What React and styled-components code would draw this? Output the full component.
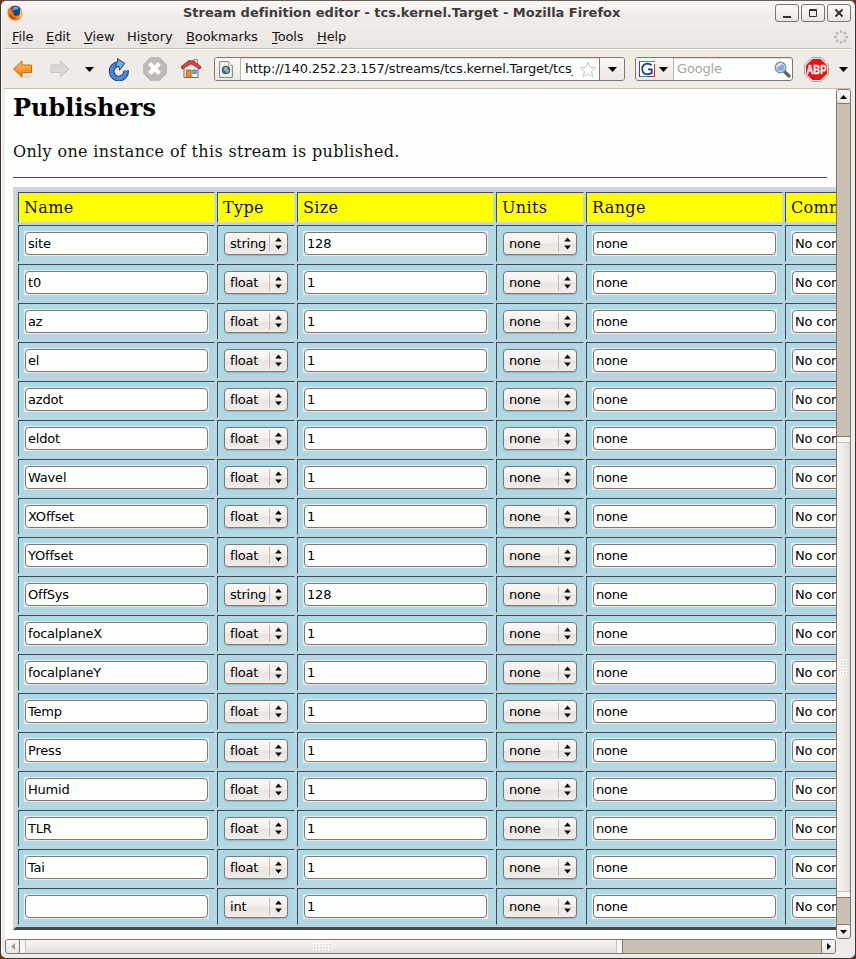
import React from 'react';
import styled, { createGlobalStyle, css } from 'styled-components';

const Global = createGlobalStyle`
  * { box-sizing: border-box; }
  html, body { margin: 0; padding: 0; background: #6f3012; overflow: hidden; }
`;

const uiFont = css`
  font-family: 'DejaVu Sans', sans-serif;
  font-size: 13px;
  line-height: 16px;
  color: #141414;
`;

const Window = styled.div`
  ${uiFont}
  width: 856px;
  height: 959px;
  display: flex;
  flex-direction: column;
  padding: 0 3px 2px 3px;
  border: 1px solid #3b3633;
  border-top-color: #695c57;
  border-radius: 6px;
  background: #efebe7;
  box-shadow: inset 1px 1px 0 #fbf8f6;
  white-space: nowrap;
`;

const TitleBar = styled.header`
  height: 23px;
  display: flex;
  align-items: center;
  padding-left: 5px;
  margin: 0 -2px;
  border-radius: 5px 5px 0 0;
  background: linear-gradient(#faf7f6, #f1ecea 70%, #eeeae7);
`;
const Title = styled.h1`
  flex: 1;
  margin: 0;
  padding-left: 160px;
  font-size: 13px;
  line-height: 16px;
  letter-spacing: -0.01px;
  font-weight: bold;
  color: #3f3b39;
`;
const WindowButtons = styled.div`
  display: flex;
  gap: 2px;
  padding-right: 3px;
`;
const WindowButton = styled.div`
  width: 24px;
  height: 18px;
  border: 1px solid #82746d;
  border-radius: 3px;
  background: linear-gradient(#fcfafa, #ebe6e3);
  svg { display: block; }
`;

const MenuBar = styled.nav`
  height: 25px;
  display: flex;
  align-items: center;
  padding: 1px 2px 0 8px;
  margin-right: 1px;
  border-bottom: 1px solid #cabfae;
  background: linear-gradient(#f0ece9, #e9e4e0);
`;
const MenuItem = styled.span`
  width: ${(p) => p.$w}px;
  letter-spacing: -0.1px;
  u { text-underline-offset: 2px; text-decoration-thickness: 1px; }
`;
const Spacer = styled.div`
  flex: 1;
`;

const ToolBar = styled.div`
  height: 40px;
  display: flex;
  align-items: center;
  padding-left: 5px;
  margin-right: 1px;
  border-top: 1px solid #fbfaf8;
  border-bottom: 1px solid #c9bdab;
  background: #efebe7;
`;
const ToolIcon = styled.div`
  width: ${(p) => p.$w}px;
  height: 26px;
  display: flex;
  justify-content: center;
  align-items: center;
  svg { display: block; flex: none; }
`;
const Field = styled.div`
  display: flex;
  align-items: center;
  width: ${(p) => p.$w}px;
  height: 24px;
  border: 1px solid #85756d;
  border-radius: 3px;
  background: #fdfffd;
  box-shadow: inset 0 1px 0 #e4deda;
  overflow: hidden;
`;
const FieldButton = styled.div`
  width: ${(p) => p.$w}px;
  height: 22px;
  display: flex;
  align-items: center;
  justify-content: center;
  gap: 4px;
  background: linear-gradient(#f9f7f6, #ece7e3);
  ${(p) => p.$side === 'right' && 'border-left: 1px solid #85756d;'}
  ${(p) => p.$side === 'left' && 'border-right: 1px solid #bcb3ab; padding-right: 2px;'}
`;
const FieldText = styled.span`
  width: ${(p) => p.$w}px;
  padding-left: ${(p) => (p.$hint ? 3 : 4)}px;
  overflow: hidden;
  letter-spacing: -0.17px;
  color: ${(p) => (p.$hint ? '#aaa29c' : '#111')};
`;

const Browser = styled.main`
  flex: none;
  display: grid;
  grid-template-columns: 831px 15px;
  grid-template-rows: 850px 15px;
  margin-left: 1px;
`;
const Page = styled.section`
  overflow: hidden;
  padding: 0 0 0 8px;
  background: #fdfffd;
  font-family: 'DejaVu Serif', serif;
  font-size: 16px;
  letter-spacing: 0.35px;
  color: #111;
`;
const Heading = styled.h2`
  margin: 5px 0 0;
  font-size: 24px;
  line-height: 28px;
  letter-spacing: 0;
  font-weight: bold;
  color: #000;
`;
const Paragraph = styled.p`
  margin: 20px 0 0;
  line-height: 20px;
`;
const Rule = styled.hr`
  width: 814px;
  height: 2px;
  margin: 15px 0 0;
  border: 0;
  border-top: 1px solid #464646;
`;

const StreamTable = styled.table`
  table-layout: fixed;
  width: 974px;
  margin-top: 8px;
  border: 3px solid;
  border-color: #d6d3d4 #454b4c #454b4c #d6d3d4;
  border-collapse: separate;
  border-spacing: 2px;
  background: #add8e6;
`;
const cell = css`
  padding: 0 5px;
  border: 1px solid;
  border-color: #464a4e #d3d0d2 #d3d0d2 #464a4e;
  text-align: left;
`;
const HeadCell = styled.th`
  ${cell}
  width: ${(p) => p.$w}px;
  height: 31px;
  line-height: 20px;
  font-weight: normal;
  background: #ffff00;
`;
const Cell = styled.td`
  ${cell}
  height: 37px;
`;
const TextFrame = styled.div`
  width: 185px;
  height: 25px;
  padding: 1px;
  background: #ece8e5;
`;
const TextBox = styled.div`
  ${uiFont}
  width: 183px;
  height: 23px;
  padding: 3px 2px;
  letter-spacing: -0.2px;
  color: #000;
  border: 1px solid #85756d;
  border-radius: 4px;
  background: #fdfffd;
`;
const Select = styled.div`
  ${uiFont}
  display: flex;
  align-items: center;
  justify-content: space-between;
  width: ${(p) => p.$w}px;
  height: 23px;
  margin: 0 0 0 1px;
  padding: 0 0 0 5px;
  letter-spacing: -0.2px;
  color: #000;
  border: 1px solid #85756d;
  border-radius: 4px;
  background: linear-gradient(#faf8f7, #f3efed 48%, #e9e4e0 52%, #f1edea);
  box-shadow: 0 1px 1px rgba(80, 90, 95, 0.25);
`;
const Arrows = styled.span`
  width: 18px;
  height: 17px;
  border-left: 1px solid #c5bcb5;
  display: flex;
  justify-content: center;
  align-items: center;
`;

const Track = styled.div`
  display: flex;
  flex-direction: ${(p) => (p.$vertical ? 'column' : 'row')};
  background: #c9bfb2;
  border: 1px solid #82766e;
  border-radius: 3px;
`;
const ScrollButton = styled.div`
  flex: none;
  width: ${(p) => (p.$vertical ? 13 : 14)}px;
  height: ${(p) => (p.$vertical ? 14 : 13)}px;
  display: flex;
  align-items: center;
  justify-content: center;
  border-radius: 2px;
  background: linear-gradient(#faf8f7, #eae5e1);
  border: 0 solid #82766e;
  ${(p) => p.$edge && `border-${p.$edge}-width: 1px;`}
`;
const Trough = styled.div`
  flex: ${(p) => (p.$size ? `0 0 ${p.$size}px` : '1')};
`;
const Thumb = styled.div`
  flex: 0 0 ${(p) => p.$size}px;
  display: flex;
  flex-direction: ${(p) => (p.$vertical ? 'column' : 'row')};
  align-items: center;
  justify-content: space-between;
  border: 0 solid #82766e;
  ${(p) => (p.$vertical ? 'border-top-width: 1px; border-bottom-width: 1px;' : 'border-right-width: 1px;')}
  background: linear-gradient(${(p) => (p.$vertical ? '90deg' : '180deg')}, #f7f4f2, #efebe8 50%, #e2dbd6);
`;
const ThumbCap = styled.div`
  align-self: stretch;
  flex: 0 0 6px;
  background: #f7f5f3;
  border: 0 solid #cdc4bd;
  border-${(p) => p.$edge}-width: 1px;
`;

const Caret = ({ w = 9, h = 5, dir = 'down', color = '#000' }) => {
  const d = {
    down: `M0 0H${w}L${w / 2} ${h}Z`,
    up: `M0 ${h}H${w}L${w / 2} 0Z`,
    left: `M${w} 0V${h}L0 ${h / 2}Z`,
    right: `M0 0V${h}L${w} ${h / 2}Z`,
  }[dir];
  return (
    <svg width={w} height={h}>
      <path d={d} fill={color} />
    </svg>
  );
};

const FirefoxIcon = () => (
  <svg width="16" height="16" viewBox="0 0 16 16">
    <circle cx="8" cy="8" r="7.4" fill="#e66000" />
    <circle cx="8.6" cy="6.4" r="5.6" fill="#17468f" />
    <path d="M6 2.3q3-1.6 5.6.2l-1 2-2.2-.2-1 1.3-2-.8z" fill="#5fa6d8" />
    <path d="M1 3.5l1.2 1 2.2-.3 1.4 1.4-1 1.4 2 .5-.8 1.6 2.4 2 3.3-.7 1.5-2.2.4-4.7 1.3 2.5q.7 8-6.4 9.2Q.7 15 .6 8z" fill="#ee7d13" />
    <path d="M13.2 3.2q2.4 3 1.5 6.3-1 3.3-4.3 4.5 2.8-2.8 2.8-5.6z" fill="#ffd64a" />
    <path d="M3 9q1 4 5.4 4.4" stroke="#b93609" strokeWidth="1.4" fill="none" />
  </svg>
);
const BackIcon = () => (
  <svg width="22" height="20" viewBox="0 0 22 20">
    <defs>
      <linearGradient id="bk" x2="0" y2="1">
        <stop offset="0" stopColor="#ffc060" />
        <stop offset="1" stopColor="#f57900" />
      </linearGradient>
    </defs>
    <ellipse cx="12" cy="17.8" rx="8" ry="1.4" fill="#dfd9d4" />
    <path d="M1.5 10L10 2V6H19.5V13.5H10V18Z" fill="url(#bk)" stroke="#cf6c0f" strokeLinejoin="round" />
  </svg>
);
const ForwardIcon = () => (
  <svg width="22" height="20" viewBox="0 0 22 20">
    <path d="M20 10L11.5 2V6H2V13.5H11.5V18Z" fill="#dcd6d4" stroke="#c9c2bf" strokeLinejoin="round" />
  </svg>
);
const ReloadIcon = () => (
  <svg width="22" height="24" viewBox="0 0 22 24">
    <path d="M18 13.5A7.2 7.2 0 1 1 10 7.2" fill="none" stroke="#17408a" strokeWidth="5.8" />
    <path d="M18 13.9A7.2 7.2 0 1 1 10.6 7.1" fill="none" stroke="#4a86d6" strokeWidth="3.9" />
    <path d="M9.4 1.6L16.8 6.4 11.5 13.2 11 9.4 8 9.7 8.2 5.3 9.8 5Z" fill="#79a8e2" stroke="#17408a" strokeLinejoin="round" />
  </svg>
);
const StopIcon = () => (
  <svg width="24" height="24" viewBox="0 0 24 24">
    <path d="M7.5.8h9L23.2 7.5v9L16.5 23.2h-9L.8 16.5v-9Z" fill="#c0b9b4" stroke="#b3aca7" />
    <path d="M6.6 6.6l9.8 9.8M16.4 6.6L6.6 16.4" stroke="#fff" strokeWidth="4.2" />
  </svg>
);
const HomeIcon = () => (
  <svg width="22" height="22" viewBox="0 0 22 22">
    <path d="M14 1.5h3.4v6H14z" fill="#f6f6f6" stroke="#777" strokeWidth=".8" />
    <path d="M4 8.5l7-4.500 7 4.500v11H4z" fill="#f4f1ee" stroke="#706a66" />
    <path d="M1 8.800L8.500 2.800H13.500L21 8.800 19.800 11 11 5.800 2.200 11z" fill="#dd4540" stroke="#a41f1b" strokeWidth=".9" strokeLinejoin="round" />
    <path d="M6.500 12h4.600v7.400H6.500z" fill="#f08a24" stroke="#a2500a" strokeWidth=".8" />
    <path d="M12.800 12h3.400v3.400h-3.400z" fill="#55c8e8" stroke="#38687a" strokeWidth=".8" />
  </svg>
);
const PageIcon = () => (
  <svg width="14" height="17" viewBox="0 0 14 17">
    <path d="M.6.6H9.6L13.4 4.4V16.4H.6Z" fill="#f2f2f0" stroke="#85857f" />
    <path d="M9.6.6V4.4H13.4" fill="#fff" stroke="#9a9a94" strokeWidth=".8" />
    <circle cx="7" cy="9" r="3.9" fill="#3a69ad" stroke="#28518f" strokeWidth=".8" />
    <path d="M4.7 7.2l2-1.5 1.8.6-.5 1.6 1.8.8-.5 2.3-1.6 1.2-1-2.3L5 9.3z" fill="#a8c468" />
  </svg>
);
const StarIcon = () => (
  <svg width="18" height="17" viewBox="0 0 18 17">
    <path d="M9 1.4l2.2 5 5.4.5-4.1 3.6 1.3 5.3L9 13l-4.800 2.800 1.300-5.300L1.400 6.900l5.400-.5z" fill="#fdfffd" stroke="#c8c6c4" strokeLinejoin="round" />
  </svg>
);
const GoogleIcon = () => (
  <svg width="16" height="16" viewBox="0 0 16 16">
    <rect width="16" height="16" fill="#fff" />
    <path d="M0 .5H16M0 15.5H8" stroke="#3ca83c" />
    <path d="M.5 0V16M8 15.5H12" stroke="#2a49b8" />
    <path d="M15.5 3V16M12 15.5H16" stroke="#d22f1c" />
    <path d="M12.6 4.3Q11 2.6 8.5 2.6Q3.3 2.8 3.2 8Q3.4 13.2 8.5 13.3Q11 13.2 12.7 12V8.4H9" fill="none" stroke="#143a9a" strokeWidth="1.7" />
  </svg>
);
const SearchIcon = () => (
  <svg width="17" height="17" viewBox="0 0 17 17">
    <path d="M10.3 10.3L15 15" stroke="#62625f" strokeWidth="3.2" strokeLinecap="round" />
    <circle cx="6.5" cy="6.5" r="5.2" fill="#9fc3ea" stroke="#8b8f92" strokeWidth="1.5" />
    <circle cx="6.5" cy="6.5" r="4.2" fill="#7fafe2" stroke="#e4eefa" strokeWidth=".7" />
    <path d="M3.5 6Q4.5 3 7.5 3.5" stroke="#dcebfa" strokeWidth="1.6" fill="none" />
  </svg>
);
const AdblockIcon = () => (
  <svg width="25" height="25" viewBox="0 0 25 25">
    <path d="M7.7.7h9.6L24.3 7.7v9.6L17.3 24.3H7.7L.7 17.3V7.7Z" fill="#fff" stroke="#9b9591" />
    <path d="M8.3 2h8.4L23 8.3v8.4L16.7 23H8.3L2 16.7V8.3Z" fill="#ee1111" />
    <text x="12.5" y="17" textAnchor="middle" textLength="20" lengthAdjust="spacingAndGlyphs" fontFamily="Liberation Sans, sans-serif" fontWeight="bold" fontSize="13" fill="#fff" stroke="#fff" strokeWidth=".3">ABP</text>
  </svg>
);
const Throbber = () => (
  <svg width="16" height="16" viewBox="0 0 16 16">
    {[0, 1, 2, 3, 4, 5, 6, 7].map((i) => (
      <rect key={i} x="6.8" y="1" width="2.4" height="3" rx=".8" fill="#bdb8b4" transform={`rotate(${i * 45} 8 8)`} />
    ))}
  </svg>
);
const SpinArrows = () => (
  <svg width="7" height="13" viewBox="0 0 7 13">
    <path d="M.2 4.5H6.8L3.5.4ZM.2 8.5H6.8L3.5 12.6Z" />
  </svg>
);
const Grip = ({ w, h }) => (
  <svg width={w} height={h}>
    <defs>
      <pattern id={`g${w}`} width="3" height="3" patternUnits="userSpaceOnUse">
        <rect width="2" height="2" fill="#fff" />
        <rect x="1" y="1" width="1" height="1" fill="#cfc7c1" />
      </pattern>
    </defs>
    <rect width={w} height={h} fill={`url(#g${w})`} />
  </svg>
);

const menus = [
  ['', 'F', 'ile', 34],
  ['', 'E', 'dit', 38],
  ['', 'V', 'iew', 43],
  ['Hi', 's', 'tory', 59],
  ['', 'B', 'ookmarks', 86],
  ['', 'T', 'ools', 45],
  ['', 'H', 'elp', 40],
];
const columns = [
  ['Name', 197],
  ['Type', 78],
  ['Size', 197],
  ['Units', 88],
  ['Range', 197],
  ['Comment', 197],
];
const rows = [
  ['site', 'string', '128'],
  ...['t0', 'az', 'el', 'azdot', 'eldot', 'Wavel', 'XOffset', 'YOffset'].map((n) => [n, 'float', '1']),
  ['OffSys', 'string', '128'],
  ...['focalplaneX', 'focalplaneY', 'Temp', 'Press', 'Humid', 'TLR', 'Tai'].map((n) => [n, 'float', '1']),
  ['', 'int', '1'],
];

const TextCell = ({ value }) => (
  <Cell>
    <TextFrame>
      <TextBox>{value}</TextBox>
    </TextFrame>
  </Cell>
);
const SelectCell = ({ value, w }) => (
  <Cell>
    <Select $w={w}>
      {value}
      <Arrows>
        <SpinArrows />
      </Arrows>
    </Select>
  </Cell>
);

export default function App() {
  return (
    <>
      <Global />
      <Window>
        <TitleBar>
          <FirefoxIcon />
          <Title>Stream definition editor - tcs.kernel.Target - Mozilla Firefox</Title>
          <WindowButtons>
            <WindowButton>
              <svg width="22" height="16"><path d="M7 11h8v2H7z" fill="#35302d" /></svg>
            </WindowButton>
            <WindowButton>
              <svg width="22" height="16"><path d="M7.5 4.5h7v7h-7zM7 5.5h8" fill="none" stroke="#35302d" /></svg>
            </WindowButton>
            <WindowButton>
              <svg width="22" height="16"><path d="M7.5 4.5l7 7M14.5 4.5l-7 7" stroke="#35302d" strokeWidth="2" /></svg>
            </WindowButton>
          </WindowButtons>
        </TitleBar>
        <MenuBar>
          {menus.map(([pre, key, post, w]) => (
            <MenuItem key={post} $w={w}>
              {pre}
              <u>{key}</u>
              {post}
            </MenuItem>
          ))}
          <Spacer />
          <Throbber />
        </MenuBar>
        <ToolBar>
          <ToolIcon $w={28}><BackIcon /></ToolIcon>
          <ToolIcon $w={46}><ForwardIcon /></ToolIcon>
          <ToolIcon $w={13}><Caret /></ToolIcon>
          <ToolIcon $w={46}><ReloadIcon /></ToolIcon>
          <ToolIcon $w={26}><StopIcon /></ToolIcon>
          <ToolIcon $w={46}><HomeIcon /></ToolIcon>
          <Field $w={411}>
            <FieldButton $w={26} $side="left"><PageIcon /></FieldButton>
            <FieldText $w={333}>http://140.252.23.157/streams/tcs.kernel.Target/tcs_kernel_Target</FieldText>
            <ToolIcon $w={4} />
            <ToolIcon $w={22}><StarIcon /></ToolIcon>
            <FieldButton $w={25} $side="right"><Caret /></FieldButton>
          </Field>
          <ToolIcon $w={10} />
          <Field $w={158}>
            <FieldButton $w={38} $side="left">
              <GoogleIcon />
              <Caret />
            </FieldButton>
            <FieldText $w={100} $hint>Google</FieldText>
            <SearchIcon />
          </Field>
          <ToolIcon $w={46}><AdblockIcon /></ToolIcon>
          <Caret />
        </ToolBar>
        <Browser>
          <Page>
            <Heading>Publishers</Heading>
            <Paragraph>Only one instance of this stream is published.</Paragraph>
            <Rule />
            <StreamTable>
              <thead>
                <tr>
                  {columns.map(([label, w]) => (
                    <HeadCell key={label} $w={w}>{label}</HeadCell>
                  ))}
                </tr>
              </thead>
              <tbody>
                {rows.map(([name, type, size]) => (
                  <tr key={name}>
                    <TextCell value={name} />
                    <SelectCell value={type} w={64} />
                    <TextCell value={size} />
                    <SelectCell value="none" w={74} />
                    <TextCell value="none" />
                    <TextCell value="No comment" />
                  </tr>
                ))}
              </tbody>
            </StreamTable>
          </Page>
          <Track $vertical>
            <ScrollButton $vertical $edge="bottom"><Caret w={7} h={4} dir="up" /></ScrollButton>
            <Trough $size={332} />
            <Thumb $vertical $size={462}>
              <ThumbCap $edge="bottom" />
              <Grip w={8} h={17} />
              <ThumbCap $edge="top" />
            </Thumb>
            <Trough />
            <ScrollButton $vertical $edge="top"><Caret w={7} h={4} /></ScrollButton>
          </Track>
          <Track>
            <ScrollButton $edge="right"><Caret w={4} h={7} dir="left" color="#a49a93" /></ScrollButton>
            <Thumb $size={603}>
              <ThumbCap $edge="right" />
              <Grip w={17} h={8} />
              <ThumbCap $edge="left" />
            </Thumb>
            <Trough />
            <ScrollButton $edge="left"><Caret w={4} h={7} dir="right" /></ScrollButton>
          </Track>
        </Browser>
      </Window>
    </>
  );
}
